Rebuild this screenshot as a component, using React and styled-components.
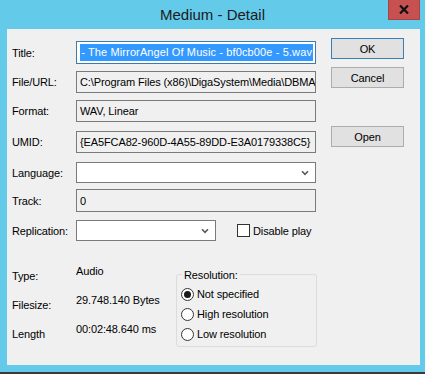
import React from "react"
import styled, { createGlobalStyle } from "styled-components"

const GlobalStyle = createGlobalStyle`
  html, body {
    margin: 0;
    padding: 0;
    background: #64caea;
  }
  body {
    font-family: "Liberation Sans", Arial, sans-serif;
  }
`

function Chevron() {
  return (
    <svg width="8" height="6" viewBox="0 0 8 6">
      <path d="M1 1.2 L4 4.4 L7 1.2" fill="none" stroke="#5a5a5a" strokeWidth="1.6" />
    </svg>
  )
}

function Radio({ checked, label }) {
  return (
    <RadioRow>
      <RadioCircle>{checked && <RadioDot />}</RadioCircle>
      <RadioLabel>{label}</RadioLabel>
    </RadioRow>
  )
}

export default function App() {
  return (
    <>
      <GlobalStyle />
      <Window>
        <TitleBar>
          <Caption>Medium - Detail</Caption>
          <CloseButton>
            <svg width="10" height="9" viewBox="0 0 10 9">
              <path d="M1 0.5 L9 8.5 M9 0.5 L1 8.5" stroke="#111" strokeWidth="2.2" />
            </svg>
          </CloseButton>
        </TitleBar>
        <Client>
          <Top>
            <Form>
              <Row $mt={12}>
                <Label>Title:</Label>
                <Field $focused $h={23} $end>
                  <Selected>- The MirrorAngel Of Music - bf0cb00e - 5.wav</Selected>
                </Field>
              </Row>
              <Row $mt={7}>
                <Label>File/URL:</Label>
                <Field>C:\Program Files (x86)\DigaSystem\Media\DBMA</Field>
              </Row>
              <Row $mt={7}>
                <Label>Format:</Label>
                <Field>WAV, Linear</Field>
              </Row>
              <Row $mt={9}>
                <Label>UMID:</Label>
                <Field>{"{EA5FCA82-960D-4A55-89DD-E3A0179338C5}"}</Field>
              </Row>
              <Row $mt={9}>
                <Label>Language:</Label>
                <Combo $w={240}>
                  <Chevron />
                </Combo>
              </Row>
              <Row $mt={6}>
                <Label>Track:</Label>
                <Field $h={23}>0</Field>
              </Row>
              <Row $mt={8}>
                <Label>Replication:</Label>
                <Combo $w={140}>
                  <Chevron />
                </Combo>
                <CheckWrap>
                  <CheckBox />
                  <CheckLabel>Disable play</CheckLabel>
                </CheckWrap>
              </Row>
            </Form>
            <Buttons>
              <Button $default>OK</Button>
              <Button $mt={8}>Cancel</Button>
              <Button $mt={38}>Open</Button>
            </Buttons>
          </Top>
          <Bottom>
            <InfoGrid>
              <InfoRow>
                <InfoLabel>Type:</InfoLabel>
                <InfoValue>Audio</InfoValue>
              </InfoRow>
              <InfoRow>
                <InfoLabel>Filesize:</InfoLabel>
                <InfoValue>29.748.140 Bytes</InfoValue>
              </InfoRow>
              <InfoRow>
                <InfoLabel>Length</InfoLabel>
                <InfoValue>00:02:48.640 ms</InfoValue>
              </InfoRow>
            </InfoGrid>
            <GroupBox>
              <Legend>Resolution:</Legend>
              <Radio checked label="Not specified" />
              <Radio label="High resolution" />
              <Radio label="Low resolution" />
            </GroupBox>
          </Bottom>
        </Client>
      </Window>
    </>
  )
}

const Window = styled.div`
  width: 425px;
  height: 372px;
  background: #64caea;
  border-bottom: 2px solid #3a3a3a;
  display: flex;
  flex-direction: column;
`

const TitleBar = styled.div`
  position: relative;
  height: 29px;
  display: flex;
  align-items: center;
  justify-content: center;
`

const Caption = styled.span`
  font-size: 15px;
  color: #1b1b1b;
  margin-top: -1px;
`

const CloseButton = styled.div`
  position: absolute;
  top: 0;
  right: 5px;
  width: 32px;
  height: 20px;
  box-sizing: border-box;
  background: #c75050;
  border: 1px solid #a84444;
  border-top: none;
  display: flex;
  align-items: center;
  justify-content: center;
`

const Client = styled.div`
  margin: 0 5px 0 7px;
  height: 336px;
  background: #f0f0f0;
  font-size: 11px;
  letter-spacing: -0.12px;
  color: #000;
`

const Top = styled.div`
  display: flex;
`

const Form = styled.div`
  width: 309px;
  padding-left: 5px;
  box-sizing: border-box;
`

const Row = styled.div`
  display: flex;
  align-items: center;
  margin-top: ${(p) => p.$mt}px;
`

const Label = styled.div`
  width: 64px;
  flex-shrink: 0;
`

const Field = styled.div`
  width: 240px;
  height: ${(p) => p.$h || 22}px;
  box-sizing: border-box;
  border: 1px solid ${(p) => (p.$focused ? "#3d7bad" : "#7a7a7a")};
  background: ${(p) => (p.$focused ? "#fff" : "#f0f0f0")};
  display: flex;
  align-items: center;
  justify-content: ${(p) => (p.$end ? "flex-end" : "flex-start")};
  padding: 0 2px 0 3px;
  white-space: nowrap;
  overflow: hidden;
`

const Selected = styled.span`
  background: #3399ff;
  color: #fff;
  padding: 2px 1px 2px 1px;
  line-height: 13px;
  letter-spacing: 0.12px;
`

const Combo = styled.div`
  width: ${(p) => p.$w}px;
  height: 21px;
  box-sizing: border-box;
  border: 1px solid #7a7a7a;
  background: #fff;
  display: flex;
  align-items: center;
  justify-content: flex-end;
  padding-right: 6px;
`

const CheckWrap = styled.div`
  display: flex;
  align-items: center;
  margin-left: 21px;
`

const CheckBox = styled.div`
  width: 13px;
  height: 13px;
  box-sizing: border-box;
  border: 1px solid #333;
  background: #fff;
`

const CheckLabel = styled.span`
  margin-left: 3px;
`

const Buttons = styled.div`
  display: flex;
  flex-direction: column;
  margin-left: 15px;
  padding-top: 9px;
`

const Button = styled.div`
  width: 73px;
  height: 21px;
  box-sizing: border-box;
  margin-top: ${(p) => p.$mt || 0}px;
  background: #e1e1e1;
  border: 1px solid ${(p) => (p.$default ? "#3c7fb1" : "#adadad")};
  display: flex;
  align-items: center;
  justify-content: center;
`

const Bottom = styled.div`
  display: flex;
  align-items: flex-start;
  padding-left: 5px;
  margin-top: 22px;
`

const InfoGrid = styled.div`
  width: 164px;
  display: flex;
  flex-direction: column;
`

const InfoRow = styled.div`
  display: flex;
  align-items: flex-start;
  height: 29px;
  line-height: 16px;
`

const InfoLabel = styled.div`
  width: 64px;
  padding-top: 5px;
`

const InfoValue = styled.div``

const GroupBox = styled.div`
  position: relative;
  margin-top: 11px;
  width: 141px;
  height: 73px;
  box-sizing: border-box;
  border: 1px solid #dcdcdc;
  border-radius: 3px;
  padding: 9px 0 0 4px;
`

const Legend = styled.span`
  position: absolute;
  top: -8px;
  left: 5px;
  padding: 0 2px;
  background: #f0f0f0;
  line-height: 16px;
`

const RadioRow = styled.div`
  display: flex;
  align-items: center;
  height: 20px;
`

const RadioCircle = styled.div`
  width: 13px;
  height: 13px;
  box-sizing: border-box;
  border: 1px solid #333;
  border-radius: 50%;
  background: #fff;
  display: flex;
  align-items: center;
  justify-content: center;
`

const RadioDot = styled.div`
  width: 7px;
  height: 7px;
  border-radius: 50%;
  background: #1a1a1a;
`

const RadioLabel = styled.span`
  margin-left: 3px;
`
